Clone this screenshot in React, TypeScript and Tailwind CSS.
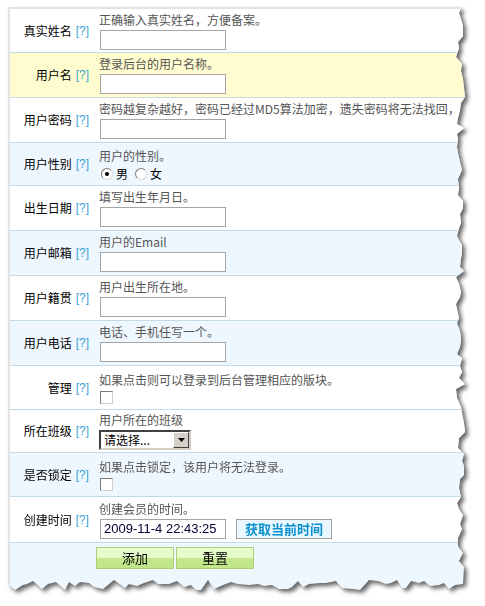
import type { ReactNode } from "react";

type Kind = "text" | "radio" | "check" | "select" | "time";

type Row = {
  label: string;
  help: string;
  kind: Kind;
  h: string;
  bg: string;
};

const rows: Row[] = [
  { label: "真实姓名", help: "正确输入真实姓名，方便备案。", kind: "text", h: "h-[44px]", bg: "bg-white" },
  { label: "用户名", help: "登录后台的用户名称。", kind: "text", h: "h-[45px]", bg: "bg-[#fffdd0]" },
  { label: "用户密码", help: "密码越复杂越好，密码已经过MD5算法加密，遗失密码将无法找回，", kind: "text", h: "h-[45px]", bg: "bg-white" },
  { label: "用户性别", help: "用户的性别。", kind: "radio", h: "h-[43px]", bg: "bg-[#eff7fe]" },
  { label: "出生日期", help: "填写出生年月日。", kind: "text", h: "h-[45px]", bg: "bg-white" },
  { label: "用户邮箱", help: "用户的Email", kind: "text", h: "h-[45px]", bg: "bg-[#eff7fe]" },
  { label: "用户籍贯", help: "用户出生所在地。", kind: "text", h: "h-[45px]", bg: "bg-white" },
  { label: "用户电话", help: "电话、手机任写一个。", kind: "text", h: "h-[45px]", bg: "bg-[#eff7fe]" },
  { label: "管理", help: "如果点击则可以登录到后台管理相应的版块。", kind: "check", h: "h-[44px]", bg: "bg-white" },
  { label: "所在班级", help: "用户所在的班级", kind: "select", h: "h-[43px]", bg: "bg-white" },
  { label: "是否锁定", help: "如果点击锁定，该用户将无法登录。", kind: "check", h: "h-[44px]", bg: "bg-[#eff7fe]" },
  { label: "创建时间", help: "创建会员的时间。", kind: "time", h: "h-[46px]", bg: "bg-white" },
];

const PANEL_W = 457;
const PANEL_H = 583;

// ragged right and bottom edge, like a page torn off
function tornEdge(w: number, h: number) {
  let seed = 11;
  const rnd = () => {
    seed = (seed * 9301 + 49297) % 233280;
    return seed / 233280;
  };
  const pts: string[] = ["0px 0px", `${w - 4}px 0px`];
  for (let y = 6; y < h - 14; y += 4 + Math.round(rnd() * 6)) {
    pts.push(`${w - Math.round(rnd() * 9)}px ${y}px`);
  }
  pts.push(`${w - 2}px ${h - 6}px`);
  for (let x = w - 10; x > 4; x -= 4 + Math.round(rnd() * 7)) {
    pts.push(`${x}px ${h - Math.round(rnd() * 10)}px`);
  }
  pts.push(`0px ${h - 6}px`);
  return `polygon(${pts.join(",")})`;
}

function TextBox() {
  return <div className="ml-[1px] mt-[2px] h-[20px] w-[126px] border border-[#a5a5a5] bg-white" />;
}

function Radio({ checked, children }: { checked?: boolean; children: ReactNode }) {
  return (
    <span className="flex items-center gap-[3px]">
      <span className="flex h-[12px] w-[12px] items-center justify-center rounded-full border border-b-[#dcdcdc] border-l-[#7a7a7a] border-r-[#dcdcdc] border-t-[#7a7a7a] bg-white">
        {checked && <span className="h-[4px] w-[4px] rounded-full bg-black" />}
      </span>
      <span className="text-black">{children}</span>
    </span>
  );
}

function CheckBox() {
  return (
    <div className="ml-[1px] mt-[3px] h-[13px] w-[13px] border border-b-[#d4d0c8] border-l-[#7a7a7a] border-r-[#d4d0c8] border-t-[#7a7a7a] bg-white" />
  );
}

function Select() {
  return (
    <div className="mt-[2px] flex h-[20px] w-[92px] items-stretch border-2 border-b-[#d4d0c8] border-l-[#404040] border-r-[#d4d0c8] border-t-[#404040] bg-white">
      <span className="flex-1 pl-[3px] text-[12px] leading-[16px] text-black">请选择...</span>
      <span className="flex w-[16px] items-center justify-center border border-b-[#404040] border-l-white border-r-[#404040] border-t-white bg-[#d4d0c8]">
        <svg width="7" height="4" viewBox="0 0 7 4">
          <path d="M0 0h7L3.5 4z" fill="#000" />
        </svg>
      </span>
    </div>
  );
}

function TimeField() {
  return (
    <div className="mt-[2px] flex items-center gap-[10px]">
      <div className="ml-[1px] flex h-[20px] w-[126px] items-center border border-[#a5a5a5] bg-white pl-[3px] font-['Liberation_Sans',sans-serif] text-[13px] text-[#000033]">
        2009-11-4 22:43:25
      </div>
      <button className="flex h-[20px] w-[96px] items-center justify-center border border-[#a0a0a0] bg-[#eaf9ff] text-[13px] font-bold text-[#0a8fcc]">
        获取当前时间
      </button>
    </div>
  );
}

function Control({ kind }: { kind: Kind }) {
  if (kind === "radio")
    return (
      <div className="ml-[2px] mt-[3px] flex items-center gap-[7px] leading-[14px]">
        <Radio checked>男</Radio>
        <Radio>女</Radio>
      </div>
    );
  if (kind === "check") return <CheckBox />;
  if (kind === "select") return <Select />;
  if (kind === "time") return <TimeField />;
  return <TextBox />;
}

export default function App() {
  return (
    <div className="min-h-[606px] bg-white pl-[8px] pt-[7px] font-['Noto_Sans_CJK_SC',sans-serif] text-[12px]">
      <div className="w-fit [filter:drop-shadow(3px_3px_2px_rgba(0,0,0,0.6))]">
        <div
          className="flex flex-col overflow-hidden border-l-2 border-t-2 border-[#e3e3e3] bg-[#eff7fe]"
          style={{ width: PANEL_W, height: PANEL_H, clipPath: tornEdge(PANEL_W, PANEL_H) }}
        >
          {rows.map((r) => (
            <div key={r.label} className={`flex shrink-0 border-b border-[#c3dbe9] ${r.h} ${r.bg}`}>
              <div className="flex w-[84px] shrink-0 items-center justify-end gap-[4px] pr-[5px] leading-[16px] text-black">
                <span>{r.label}</span>
                <span className="font-['Liberation_Sans',sans-serif] text-[12px] text-[#3aa2d6]">[?]</span>
              </div>
              <div className="flex flex-col justify-center pl-[5px]">
                <div className="whitespace-nowrap leading-[16px] text-[#555]">{r.help}</div>
                <Control kind={r.kind} />
              </div>
            </div>
          ))}
          <div className="flex gap-[2px] pl-[86px] pt-[4px]">
            <button className="h-[22px] w-[78px] border border-[#a9cf7a] bg-[linear-gradient(#eafdd2_0%,#e4fbc8_48%,#c4e98e_52%,#c0e688_100%)] text-[13px] leading-[20px] text-black">
              添加
            </button>
            <button className="h-[22px] w-[78px] border border-[#a9cf7a] bg-[linear-gradient(#eafdd2_0%,#e4fbc8_48%,#c4e98e_52%,#c0e688_100%)] text-[13px] leading-[20px] text-black">
              重置
            </button>
          </div>
        </div>
      </div>
    </div>
  );
}
